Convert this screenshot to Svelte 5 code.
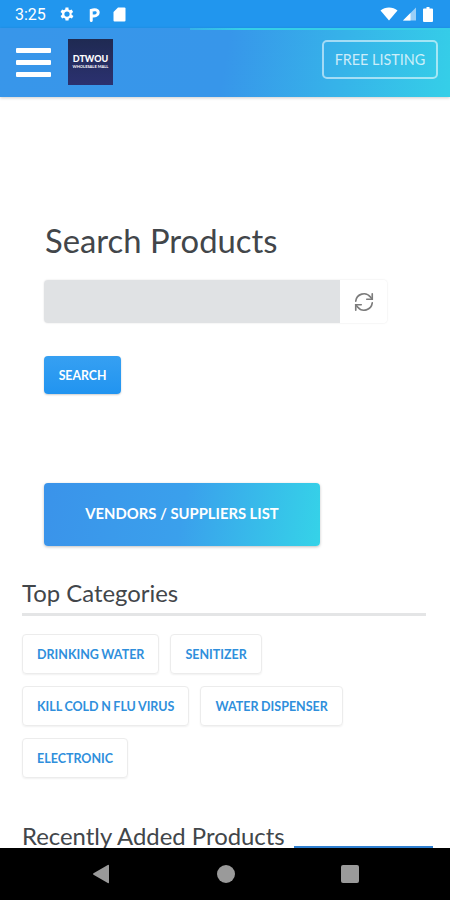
<script>
  // Kategorien unter "Top Categories"
  const categories = [
    "Drinking Water",
    "Senitizer",
    "Kill Cold N Flu Virus",
    "Water Dispenser",
    "Electronic",
  ];
</script>

<div class="screen">
  <div class="status-bar">
    <div class="status-left">
      <span class="time">3:25</span>
      <svg class="st-icon" width="18" height="18" viewBox="0 0 24 24" fill="#fff">
        <path d="M19.4 13a7.5 7.5 0 0 0 0-2l2.100-1.600-2-3.500-2.500 1a7.600 7.600 0 0 0-1.700-1L15.300 3.300h-4l-.4 2.600c-.6.3-1.200.6-1.700 1l-2.500-1-2 3.500L6.800 11a7.500 7.500 0 0 0 0 2l-2.100 1.600 2 3.500 2.500-1c.5.4 1.100.7 1.700 1l.4 2.600h4l.4-2.600c.6-.3 1.200-.6 1.700-1l2.500 1 2-3.500zM13.300 15.500a3.500 3.500 0 1 1 0-7 3.500 3.500 0 0 1 0 7z" transform="translate(-1.300 0)" />
      </svg>
      <svg class="st-icon" width="13" height="15" viewBox="0 0 14 16" fill="none">
        <path d="M3.500 14.500V3.500c4-1.500 7.500-.5 7.500 2.500s-3.500 4-6.500 3.500" stroke="#fff" stroke-width="3.200" stroke-linecap="round" />
      </svg>
      <svg class="st-icon" width="13" height="15" viewBox="0 0 13 15" fill="#fff">
        <path d="M5 0.500h6.500a1 1 0 0 1 1 1v12a1 1 0 0 1-1 1h-10a1 1 0 0 1-1-1V5z" />
      </svg>
    </div>
    <div class="status-right">
      <svg width="18" height="14" viewBox="0 0 18 14" fill="#fff"><path d="M0.500 3.500C5 -0.500 13 -0.500 17.500 3.500L9 13.500z" /></svg>
      <svg width="14" height="14" viewBox="0 0 14 14"><path d="M14 0.500V13.500H1z" fill="#fff" opacity="0.55" /><path d="M8.500 6V13.500H1z" fill="#fff" /></svg>
      <svg class="battery" width="10" height="15" viewBox="0 0 10 15" fill="#fff"><path d="M3.500 0h3v1.500H9a1 1 0 0 1 1 1V14a1 1 0 0 1-1 1H1a1 1 0 0 1-1-1V2.500a1 1 0 0 1 1-1h2.500z" /></svg>
    </div>
  </div>

  <header class="app-bar">
    <button class="burger" aria-label="Menu"><span></span><span></span><span></span></button>
    <div class="logo">
      <span class="logo-main">DTWOU</span>
      <span class="logo-sub">WHOLESALE MALL</span>
    </div>
    <a class="listing-btn" href="#listing">FREE LISTING</a>
  </header>

  <main class="content">
    <section class="search">
      <h1>Search Products</h1>
      <div class="search-group">
        <div class="search-input"></div>
        <div class="refresh">
          <svg width="22" height="22" viewBox="0 0 24 24" fill="none" stroke="#7c7c7c" stroke-width="1.800" stroke-linecap="round">
            <path d="M3 11a9 9 0 0 1 16-4.500L21 9" />
            <path d="M21 3v6h-6" />
            <path d="M21 13a9 9 0 0 1-16 4.500L3 15" />
            <path d="M3 21v-6h6" />
          </svg>
        </div>
      </div>
      <button class="search-btn">SEARCH</button>
      <button class="vendors-btn">VENDORS / SUPPLIERS LIST</button>
    </section>

    <section class="categories">
      <h2>Top Categories</h2>
      <div class="chips">
        {#each categories as cat}
          <a class="chip" href="#cat">{cat.toUpperCase()}</a>
        {/each}
      </div>
    </section>

    <section class="recent">
      <h2>Recently Added Products</h2>
      <div class="recent-row"><span class="view-all"></span></div>
    </section>
  </main>

  <nav class="nav-bar">
    <svg width="20" height="20" viewBox="0 0 20 20" fill="#9a9a9a"><path d="M18 1.500V18.500a.8.800 0 0 1-1.200.6L2.500 10.800a1 1 0 0 1 0-1.600L16.800.9a.8.800 0 0 1 1.200.6z" /></svg>
    <span class="nav-circle"></span>
    <span class="nav-square"></span>
  </nav>
</div>

<style>
  :global(body) {
    margin: 0;
    background: #fff;
  }
  .screen {
    width: 450px;
    height: 900px;
    display: flex;
    flex-direction: column;
    overflow: hidden;
    font-family: Lato, "Noto Sans", sans-serif;
    color: #42464a;
  }
  .status-bar {
    height: 28px;
    flex: none;
    display: flex;
    justify-content: space-between;
    align-items: center;
    padding: 0 17px 0 15px;
    background: #2196ee;
    color: #fff;
  }
  .status-left {
    display: flex;
    align-items: center;
    gap: 12px;
  }
  .time {
    font-family: Roboto, sans-serif;
    font-size: 16px;
  }
  .status-right {
    display: flex;
    align-items: center;
    gap: 4px;
  }
  .battery {
    margin-left: 3px;
  }
  .app-bar {
    height: 69px;
    flex: none;
    display: flex;
    align-items: center;
    padding: 0 12px 0 16px;
    background: linear-gradient(100deg, #3896ea 0%, #3796ea 50%, #35cfe8 100%);
    box-shadow: 0 1px 3px rgba(0, 0, 0, 0.2);
    position: relative;
  }
  /* dünne helle Linie oben rechts im Header */
  .app-bar::before {
    content: "";
    position: absolute;
    top: 0;
    left: 190px;
    right: 0;
    height: 2px;
    background: linear-gradient(90deg, rgba(53, 207, 232, 0.5), #35cfe8 20%);
  }
  .burger {
    width: 35px;
    height: 29px;
    padding: 0;
    border: 0;
    background: none;
    display: flex;
    flex-direction: column;
    justify-content: space-between;
  }
  .burger span {
    height: 5px;
    background: #fff;
    border-radius: 1px;
  }
  .logo {
    width: 45px;
    height: 46px;
    margin-left: 17px;
    margin-bottom: 2px;
    background: linear-gradient(180deg, #1f2a52, #2b3170);
    display: flex;
    flex-direction: column;
    align-items: center;
    justify-content: center;
    color: #fff;
    line-height: 1;
  }
  .logo-main {
    font-size: 9px;
    font-weight: 900;
  }
  .logo-sub {
    font-size: 4px;
    font-weight: 700;
    margin-top: 2px;
    white-space: nowrap;
  }
  .listing-btn {
    margin-left: auto;
    width: 112px;
    height: 35px;
    border: 2px solid rgba(255, 255, 255, 0.55);
    border-radius: 5px;
    display: flex;
    align-items: center;
    justify-content: center;
    color: rgba(255, 255, 255, 0.75);
    font-size: 14.400px;
    text-decoration: none;
    margin-bottom: 7px;
  }
  .content {
    flex: 1;
    min-height: 0;
    overflow: hidden;
    padding: 0 24px 0 22px;
  }
  .search {
    padding: 124px 0 0 22px;
  }
  h1 {
    margin: 0 0 19px 1px;
    font-size: 32.800px;
    font-weight: 400;
    line-height: 40px;
  }
  .search-group {
    display: flex;
    width: 343px;
    height: 43px;
    border-radius: 4px;
    box-shadow: 0 0 2px rgba(0, 0, 0, 0.12);
    overflow: hidden;
  }
  .search-input {
    flex: 1;
    background: #e0e2e4;
  }
  .refresh {
    width: 47px;
    display: flex;
    align-items: center;
    justify-content: center;
    background: #fff;
  }
  .search-btn {
    display: block;
    width: 77px;
    height: 38px;
    margin-top: 33px;
    border: 0;
    border-radius: 4px;
    background: linear-gradient(180deg, #36a0f2, #2194f0);
    box-shadow: 0 1px 2px rgba(0, 0, 0, 0.2);
    color: #fff;
    font: 700 12.300px Lato, sans-serif;
  }
  .vendors-btn {
    display: block;
    width: 276px;
    height: 63px;
    margin-top: 89px;
    padding: 0 0 3px;
    border: 0;
    border-radius: 4px;
    background: linear-gradient(100deg, #3a93ea 0%, #3aa0ec 50%, #35d3e8 100%);
    box-shadow: 0 1px 3px rgba(0, 0, 0, 0.25);
    color: #fff;
    font: 700 14.800px Lato, sans-serif;
  }
  .categories {
    margin-top: 31px;
  }
  h2 {
    margin: 0;
    font-size: 23.900px;
    font-weight: 400;
    line-height: 32px;
  }
  .categories h2 {
    padding-bottom: 4px;
    border-bottom: 3px solid #e4e5e6;
  }
  .chips {
    display: flex;
    flex-wrap: wrap;
    gap: 12px 11px;
    margin-top: 18px;
  }
  .chip {
    height: 40px;
    box-sizing: border-box;
    padding: 0 14px;
    display: flex;
    align-items: center;
    border: 1px solid #ececec;
    border-radius: 4px;
    box-shadow: 0 1px 2px rgba(0, 0, 0, 0.06);
    color: #2f8fdc;
    font-size: 12.500px;
    font-weight: 700;
    word-spacing: -0.5px;
    text-decoration: none;
  }
  .recent {
    margin-top: 42px;
  }
  .recent-row {
    display: flex;
    justify-content: flex-end;
    margin-top: -6px;
  }
  .view-all {
    width: 139px;
    height: 30px;
    margin-right: -7px;
    background: #2f7fd0;
  }
  .nav-bar {
    height: 52px;
    flex: none;
    display: flex;
    align-items: center;
    background: #000;
    padding: 0 91px;
    justify-content: space-between;
  }
  .nav-circle {
    width: 18px;
    height: 18px;
    border-radius: 50%;
    background: #9a9a9a;
  }
  .nav-square {
    width: 18px;
    height: 18px;
    border-radius: 2px;
    background: #9a9a9a;
  }
</style>
